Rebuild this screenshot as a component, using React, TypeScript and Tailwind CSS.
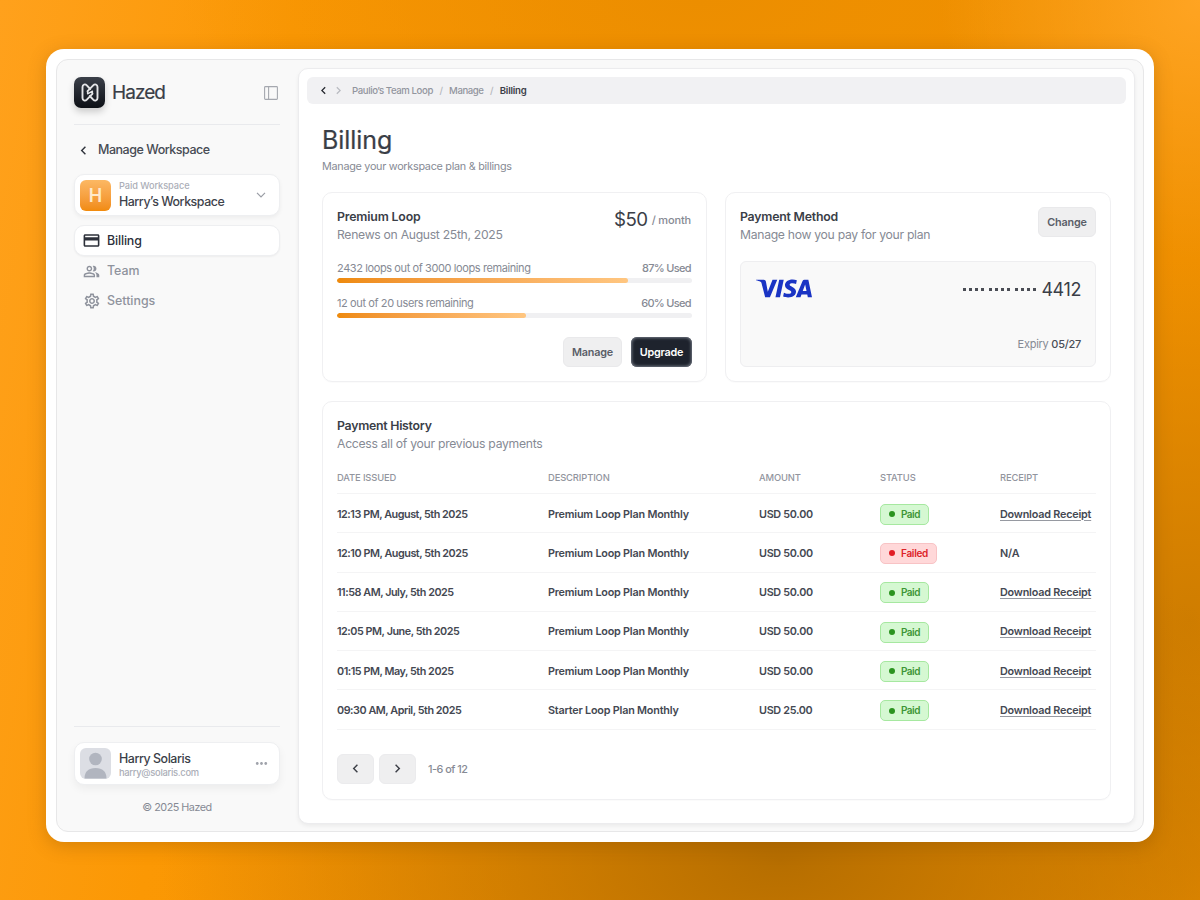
import React, { useState } from 'react'
import { MdCreditCard, MdOutlinePeopleAlt, MdOutlineSettings, MdChevronLeft, MdChevronRight, MdMoreHoriz } from 'react-icons/md'
import { SiVisa } from 'react-icons/si'

type Payment = {
  date: string
  plan: string
  amount: string
  status: 'Paid' | 'Failed'
}

const payments: Payment[] = [
  { date: '12:13 PM, August, 5th 2025', plan: 'Premium Loop Plan Monthly', amount: 'USD 50.00', status: 'Paid' },
  { date: '12:10 PM, August, 5th 2025', plan: 'Premium Loop Plan Monthly', amount: 'USD 50.00', status: 'Failed' },
  { date: '11:58 AM, July, 5th 2025', plan: 'Premium Loop Plan Monthly', amount: 'USD 50.00', status: 'Paid' },
  { date: '12:05 PM, June, 5th 2025', plan: 'Premium Loop Plan Monthly', amount: 'USD 50.00', status: 'Paid' },
  { date: '01:15 PM, May, 5th 2025', plan: 'Premium Loop Plan Monthly', amount: 'USD 50.00', status: 'Paid' },
  { date: '09:30 AM, April, 5th 2025', plan: 'Starter Loop Plan Monthly', amount: 'USD 25.00', status: 'Paid' },
]

const navItems = [
  { name: 'Billing', icon: MdCreditCard, size: 19 },
  { name: 'Team', icon: MdOutlinePeopleAlt, size: 17 },
  { name: 'Settings', icon: MdOutlineSettings, size: 18 },
]

function Logo() {
  return (
    <div className="flex h-[31px] w-[31px] items-center justify-center rounded-[7px] bg-gradient-to-b from-[#3b4049] to-[#0d1016] shadow-[0_4px_7px_rgba(0,0,0,0.18)]">
      <svg width="18" height="19" viewBox="0 0 18 19" fill="none" stroke="#e4e5e7" strokeWidth="1.9" strokeLinecap="round" strokeLinejoin="round">
        <path d="M9.200 6 5.800 2.300C4.100.6 1.500 1.400 1.500 4v11c0 2.600 2.600 3.400 4.300 1.700L11.400 10.800" />
        <path d="M8.800 13l3.400 3.700c1.700 1.700 4.300.9 4.300-1.700V4c0-2.600-2.600-3.400-4.300-1.700L6.600 8.200" />
        <path d="M6.600 8.200v2.600l4.800-2.600v2.600" strokeWidth="1.400" />
      </svg>
    </div>
  )
}

function Sidebar() {
  const [active, setActive] = useState('Billing')

  return (
    <aside className="flex w-[241px] flex-col pt-[17px] pr-[18px] pb-4 pl-[17px]">
      <div className="flex items-center">
        <Logo />
        <span className="ml-[7px] text-[19px] leading-6 tracking-[-0.95px] text-[#3a3e47] [-webkit-text-stroke:0.2px]">Hazed</span>
        <svg className="mr-[2px] ml-auto" width="14" height="14" viewBox="0 0 14 14" fill="none" stroke="#a5a8af" strokeWidth="1.1">
          <rect x="0.6" y="0.6" width="12.8" height="12.8" rx="0.8" />
          <path d="M4.6 0.6v12.8" />
        </svg>
      </div>

      <div className="mt-4 h-px bg-[#e9eaed]" />

      <div className="mt-[17px] flex h-4 items-center text-[12.5px] font-medium tracking-[-0.47px] text-[#474b54]">
        <MdChevronLeft className="mr-[6px] ml-px" size={17} color="#30343d" />
        Manage Workspace
      </div>

      <div className="mt-4 flex h-[42px] items-center rounded-[10px] border border-[#eeeff1] bg-white px-[5px] shadow-[0_2px_4px_rgba(0,0,0,0.05)]">
        <div className="flex h-[31px] w-[31px] items-center justify-center rounded-[6px] bg-gradient-to-b from-[#fcb863] to-[#f18b0b] text-[18px] font-semibold text-[#ffe9cb]">H</div>
        <div className="ml-2">
          <p className="text-[9.2px] leading-3 font-medium tracking-[-0.05px] text-[#abaeb7]">Paid Workspace</p>
          <p className="mt-[2px] text-[12.4px] leading-4 font-medium tracking-[-0.45px] text-[#3e424b]">Harry’s Workspace</p>
        </div>
        <svg className="mr-2 ml-auto" width="10" height="6" viewBox="0 0 10 6" fill="none" stroke="#9a9da5" strokeWidth="1.2">
          <path d="M1 .8 5 4.8 9 .8" />
        </svg>
      </div>

      <nav className="mt-[9px] flex flex-col">
        {navItems.map(({ name, icon: Icon, size }) => (
          <button
            key={name}
            onClick={() => setActive(name)}
            className={
              active === name
                ? 'flex h-[31px] items-center gap-1.5 rounded-[10px] border border-[#eeeff1] bg-white pl-[7px] text-[12.4px] font-medium tracking-[-0.15px] text-[#2c303a] shadow-[0_1px_2px_rgba(0,0,0,0.05)]'
                : 'flex h-[30px] items-center gap-1.5 pl-[8px] text-[12.4px] font-medium text-[#8f939d]'
            }
          >
            <span className="flex w-[19px] justify-center">
              <Icon size={size} />
            </span>
            <span className="pt-px">{name}</span>
          </button>
        ))}
      </nav>

      <div className="mt-auto h-px bg-[#e9eaed]" />
      <div className="mt-[15px] flex h-[43px] items-center rounded-[10px] border border-[#eeeff1] bg-white px-[5px] shadow-[0_4px_8px_rgba(0,0,0,0.05)]">
        <svg width="31" height="31" viewBox="0 0 31 31">
          <rect width="31" height="31" rx="6" fill="#dcdee4" />
          <circle cx="15.500" cy="11" r="6.3" fill="#b1b5bf" />
          <path d="M4.5 30.5c0-7 4-10.500 11-10.500s11 3.500 11 10.500z" fill="#b1b5bf" />
        </svg>
        <div className="ml-2 pt-[2px]">
          <p className="text-[12.4px] leading-4 font-medium tracking-[-0.43px] text-[#3a3e47]">Harry Solaris</p>
          <p className="text-[9.4px] leading-3 font-medium tracking-[-0.3px] text-[#abaeb7]">harry@solaris.com</p>
        </div>
        <MdMoreHoriz className="mr-1 ml-auto" size={17} color="#a0a3ab" />
      </div>
      <p className="mt-4 text-center text-[10.8px] leading-[14px] tracking-[-0.5px] text-[#868a94]">© 2025 Hazed</p>
    </aside>
  )
}

function Usage({ label, used, percent }: { label: string; used: string; percent: number }) {
  return (
    <div>
      <div className="flex justify-between text-[11px] leading-[14px] text-[#868a94]">
        <span className="tracking-[-0.4px]">{label}</span>
        <span className="font-medium tracking-[-0.7px]">{used}&thinsp;</span>
      </div>
      <div className="mt-[3px] h-[5px] overflow-hidden rounded-full bg-[#f0f0f2]">
        <div className="h-full rounded-full bg-gradient-to-r from-[#ee8a0a] to-[#ffc680]" style={{ width: `${percent}%` }} />
      </div>
    </div>
  )
}

function StatusBadge({ status }: { status: Payment['status'] }) {
  if (status === 'Failed') {
    return (
      <span className="inline-flex h-[21px] w-[57px] items-center gap-[6px] rounded-[5px] border border-[#f8c3c5] bg-[#ffd8d9] pl-2 text-[10px] font-semibold tracking-[-0.3px] text-[#dc2228]">
        <span className="h-1.5 w-1.5 rounded-full bg-[#e11d25]" />
        Failed
      </span>
    )
  }
  return (
    <span className="inline-flex h-[21px] w-[49px] items-center gap-[6px] rounded-[5px] border border-[#a6e8a0] bg-[#d5f8d2] pl-2 text-[10px] font-semibold tracking-[-0.5px] text-[#3d9636]">
      <span className="h-1.5 w-1.5 rounded-full bg-[#2b931f]" />
      Paid
    </span>
  )
}

export default function App() {
  return (
    <div className="flex h-[900px] w-[1200px] items-start bg-[radial-gradient(circle_at_1200px_0px,#ffa422_0px,transparent_260px),radial-gradient(ellipse_620px_340px_at_780px_860px,#b66e00_0%,transparent_100%),radial-gradient(ellipse_300px_360px_at_1190px_620px,#cf7d00_0%,transparent_100%),radial-gradient(ellipse_520px_200px_at_700px_0px,#ec8e00_0%,transparent_100%),linear-gradient(100deg,#ffa11c_0%,#fb9804_22%,#f59300_50%,#ee8f00_100%)] pt-[49px] pl-[46px] font-[Inter,sans-serif]">
      <div className="h-[793px] w-[1108px] rounded-[18px] bg-white px-[10px] py-[10px] shadow-[0_4px_18px_rgba(100,55,0,0.25)]">
        <div className="flex h-[773px] rounded-xl border border-[#e7e7e8] bg-[#f9f9f9]">
          <Sidebar />

          {/* Main Content */}
          <main className="mt-2 h-[756px] w-[837px] rounded-[10px] border border-[#ececee] bg-white px-2 pt-2 shadow-[0_2px_4px_rgba(0,0,0,0.06)]">
            <div className="flex h-[27px] items-center rounded-[6px] bg-[#f1f1f3] pl-[9px] text-[9.6px] font-medium tracking-[-0.42px] text-[#92959e]">
              <MdChevronLeft size={15} color="#24272e" />
              <MdChevronRight size={15} color="#b9bbc1" />
              <span className="ml-1.5 pt-px tracking-[-0.4px]">Paulio’s Team Loop</span>
              <span className="mx-[6.5px] pt-px text-[#b5b7bd]">/</span>
              <span className="pt-px">Manage</span>
              <span className="mx-[6.5px] pt-px text-[#b5b7bd]">/</span>
              <span className="pt-px font-semibold tracking-[-0.2px] text-[#3a3d46]">Billing</span>
            </div>

            <div className="px-[15px] pt-5">
              <h1 className="text-[25px] leading-8 tracking-[-0.05px] text-[#3a3e47] [-webkit-text-stroke:0.2px]">Billing</h1>
              <p className="mt-[3px] text-[10.8px] leading-4 tracking-[-0.27px] text-[#868a94]">Manage your workspace plan &amp; billings</p>

              <div className="mt-[17px] flex gap-[18px]">
                {/* Current plan */}
                <section className="flex h-[190px] w-[385px] flex-col rounded-[10px] border border-[#f0f0f2] px-[14px] pt-[15px] pb-[14px] shadow-[0_1px_1px_rgba(0,0,0,0.02)]">
                  <div className="flex justify-between">
                    <div>
                      <h2 className="text-[12.3px] leading-[18px] font-semibold tracking-[-0.16px] text-[#3a3e47]">Premium Loop</h2>
                      <p className="text-[12.2px] leading-[18px] tracking-[-0.3px] text-[#868a94]">Renews on August 25th, 2025</p>
                    </div>
                    <p className="mr-px flex items-center gap-1 self-start text-[18.7px] leading-6 tracking-[-0.5px] text-[#3a3e47]">
                      $50 <span className="text-[11px] font-medium tracking-[-0.15px] text-[#868a94]">/ month</span>
                    </p>
                  </div>
                  <div className="mt-[17px] flex flex-col gap-[13px]">
                    <Usage label="2432 loops out of 3000 loops remaining" used="87% Used" percent={82} />
                    <Usage label="12 out of 20 users remaining" used="60% Used" percent={53.3} />
                  </div>
                  <div className="mt-auto flex justify-end gap-[9px]">
                    <button className="h-[30px] w-[59px] rounded-[6px] border border-[#e9e9eb] bg-[#efeff0] pt-[2px] text-[10.8px] font-semibold tracking-[-0.2px] text-[#5a5e68]">Manage</button>
                    <button className="h-[30px] w-[61px] rounded-[6px] bg-[#1e232d] pt-[2px] text-[10.8px] font-semibold tracking-[-0.2px] text-white shadow-[inset_0_0_3px_1px_#737985]">Upgrade</button>
                  </div>
                </section>

                {/* Payment method */}
                <section className="h-[190px] w-[386px] rounded-[10px] border border-[#f0f0f2] px-[14px] pt-[14px] shadow-[0_1px_1px_rgba(0,0,0,0.02)]">
                  <div className="flex justify-between">
                    <div className="pt-px">
                      <h2 className="text-[12.3px] leading-[18px] font-semibold tracking-[-0.2px] text-[#3a3e47]">Payment Method</h2>
                      <p className="text-[12.2px] leading-[18px] tracking-[-0.3px] text-[#868a94]">Manage how you pay for your plan</p>
                    </div>
                    <button className="h-[30px] w-[58px] rounded-[6px] border border-[#e9e9eb] bg-[#efeff0] pt-[2px] text-[10.8px] font-semibold tracking-[-0.2px] text-[#5a5e68]">Change</button>
                  </div>
                  <div className="mt-[17px] flex h-[106px] flex-col justify-between rounded-[6px] border border-[#eeeef0] bg-[#f9f9f9] pt-[15px] pr-[14px] pb-[14px] pl-[15px]">
                    <div className="flex items-center justify-between">
                      <svg className="mt-[-2px] h-[19px] w-[56px]" viewBox="0 7.9 24 8.2" preserveAspectRatio="none">
                        <SiVisa size={24} color="#1a34c4" />
                      </svg>
                      <div className="flex items-center gap-[5px] text-[18px] leading-6 tracking-[-0.4px] text-[#3a3e47]">
                        {[0, 1, 2].map(group => (
                          <span key={group} className="flex gap-[3px]">
                            {[0, 1, 2, 3].map(dot => (
                              <span key={dot} className="h-[3px] w-[3px] bg-[#4a4d55]" />
                            ))}
                          </span>
                        ))}
                        <span className="pt-px">4412</span>
                      </div>
                    </div>
                    <p className="text-right text-[11px] leading-4 tracking-[-0.27px] text-[#868a94]">
                      Expiry <span className="font-medium text-[#4a4e57]">05/27</span>
                    </p>
                  </div>
                </section>
              </div>

              {/* Payment History */}
              <section className="mt-[19px] h-[399px] rounded-[10px] border border-[#f0f0f2] px-[14px] pt-[15px] shadow-[0_1px_1px_rgba(0,0,0,0.02)]">
                <h2 className="text-[12.3px] leading-[18px] font-semibold tracking-[-0.25px] text-[#3a3e47]">Payment History</h2>
                <p className="text-[12.2px] leading-[18px] tracking-[-0.28px] text-[#868a94]">Access all of your previous payments</p>

                <div className="mt-[8px] grid h-[33px] grid-cols-[211px_211px_121px_120px_1fr] items-center border-b border-[#f4f4f5] pt-[2px] text-[9.4px] font-medium tracking-[-0.12px] text-[#92959e]">
                  <span>DATE ISSUED</span>
                  <span>DESCRIPTION</span>
                  <span>AMOUNT</span>
                  <span>STATUS</span>
                  <span>RECEIPT</span>
                </div>
                {payments.map(payment => (
                  <div
                    key={payment.date}
                    className="grid h-[39.3px] grid-cols-[211px_211px_121px_120px_1fr] items-center border-b border-[#f4f4f5] text-[10.8px] font-semibold tracking-[-0.2px] text-[#444852]"
                  >
                    <span className="pt-[3px] tracking-[-0.46px]">{payment.date}</span>
                    <span className="pt-[3px]">{payment.plan}</span>
                    <span className="pt-[3px] tracking-[-0.3px]">{payment.amount}</span>
                    <span className="flex pt-[2px]">
                      <StatusBadge status={payment.status} />
                    </span>
                    {payment.status === 'Paid' ? (
                      <a className="justify-self-start pt-[3px] whitespace-nowrap underline decoration-[#9699a1] underline-offset-2" href="#">
                        Download Receipt
                      </a>
                    ) : (
                      <span className="pt-[3px]">N/A</span>
                    )}
                  </div>
                ))}

                <div className="mt-[24px] flex items-center">
                  <button className="flex h-[30px] w-[37px] items-center justify-center rounded-[6px] border border-[#ebebed] bg-[#efeff0]">
                    <MdChevronLeft size={17} color="#3c3f47" />
                  </button>
                  <button className="ml-[5px] flex h-[30px] w-[37px] items-center justify-center rounded-[6px] border border-[#ebebed] bg-[#efeff0]">
                    <MdChevronRight size={17} color="#3c3f47" />
                  </button>
                  <span className="ml-3 pt-[2px] text-[10.8px] font-medium tracking-[-0.47px] text-[#868a94]">1-6 of 12</span>
                </div>
              </section>
            </div>
          </main>
        </div>
      </div>
    </div>
  )
}
